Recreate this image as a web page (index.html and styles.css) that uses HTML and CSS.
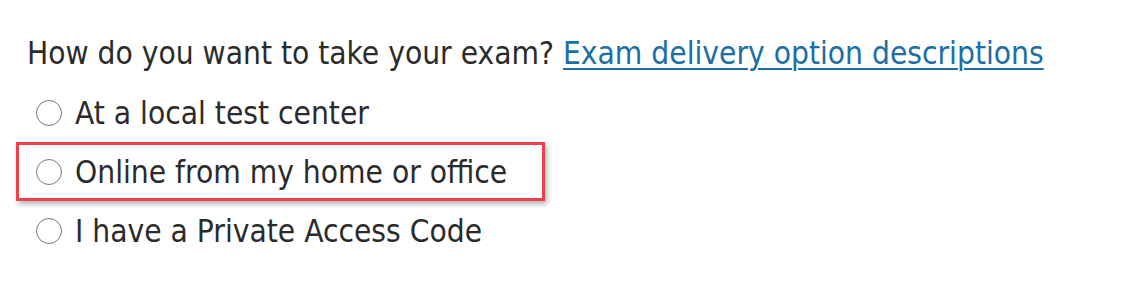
FILE: index.html
```html
<!DOCTYPE html>
<html lang="en">
<head>
<meta charset="utf-8">
<title>Exam delivery</title>
<link rel="stylesheet" href="styles.css">
</head>
<body>
<div class="page">
  <p class="question">How do you want to take your exam? <a href="#" class="link">Exam delivery option descriptions</a></p>
  <div class="options">
    <label class="option"><input type="radio" name="delivery" class="radio"><span>At a local test center</span></label>
    <label class="option option--highlight"><input type="radio" name="delivery" class="radio"><span>Online from my home or office</span></label>
    <label class="option"><input type="radio" name="delivery" class="radio"><span>I have a Private Access Code</span></label>
  </div>
</div>
</body>
</html>
```
FILE: styles.css
```css
html, body {
  margin: 0;
  padding: 0;
  background: #ffffff;
}
.page {
  font-family: "DejaVu Sans Condensed", "DejaVu Sans", Verdana, sans-serif;
  font-stretch: semi-condensed;
  font-size: 31.4px;
  color: #2b2b2b;
  padding-top: 33px;
}
.question {
  margin: 0 0 0 27px;
  height: 40px;
  line-height: 40px;
  white-space: nowrap;
}
.link {
  color: #1b6ea6;
  text-decoration: underline;
  text-underline-offset: 4px;
  text-decoration-thickness: 2px;
}
.options {
  display: flex;
  flex-direction: column;
  align-items: flex-start;
  margin-left: 16px;
  margin-top: 10px;
}
.option {
  display: flex;
  align-items: center;
  box-sizing: border-box;
  height: 59px;
  width: 529px;
  padding-left: 17px;
  border: 3px solid transparent;
  white-space: nowrap;
}
.option--highlight {
  border-color: #f0414a;
  box-shadow: 2px 3px 5px rgba(0, 0, 0, 0.3);
}
.radio {
  appearance: none;
  -webkit-appearance: none;
  box-sizing: border-box;
  width: 26px;
  height: 26px;
  margin: 0 13px 0 0;
  border: 1.5px solid #7a7a7a;
  border-radius: 50%;
  background: #ffffff;
  flex: none;
}
```
